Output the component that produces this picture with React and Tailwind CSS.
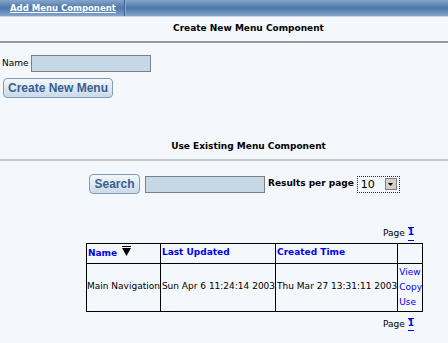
const font = { fontFamily: '"DejaVu Sans", Verdana, sans-serif' };

const Button = ({ children, className = '' }) => (
    <button
        className={`whitespace-nowrap rounded-[4px] border border-[#7f9db9] bg-gradient-to-b from-[#f4f8fc] to-[#c9d9ea] px-0 text-[12px] font-bold leading-none text-[#3a5f8e] ${className}`}
        style={{ fontFamily: '"Liberation Sans", Arial, sans-serif' }}
    >
        {children}
    </button>
);

const PageLink = () => (
    <div className="flex justify-end pr-[34px] text-[9px] text-black">
        <span>Page&nbsp;</span>
        <a className="border-t border-b border-[#0000ee] font-bold leading-[9px] text-[#0000ee]">1</a>
    </div>
);

export default function App() {
    return (
        <div className="h-[343px] w-[448px] overflow-hidden bg-[#f4f7fb]" style={font}>
            {/* header tab bar */}
            <div className="flex h-[16px] bg-gradient-to-b from-[#86a5cb] via-[#4d77aa] to-[#86a5cb]">
                <div className="flex w-[125px] items-center border-r border-[#3d6291] pl-[10px]">
                    <span className="text-[8.5px] font-bold leading-none text-white underline">Add Menu Component</span>
                </div>
                <div className="flex-1 border-l border-[#8eaad0]" />
            </div>
            <div className="h-[1px] bg-[#c8d6e8]" />

            <div className="flex h-[24px] items-center justify-center pl-[49px] text-[9px] font-bold">
                Create New Menu Component
            </div>
            <div className="h-[2px] bg-[#9a9a9a]" />

            <div className="mt-[12px] flex items-center gap-[2px] pl-[2px] text-[9px]">
                <span>Name</span>
                <div className="h-[17px] w-[120px] border border-[#808080] bg-[#c6d7e6]" />
            </div>
            <Button className="ml-[3px] mt-[6px] block h-[20px] w-[110px]">Create New Menu</Button>

            <div className="mt-[39px] flex h-[20px] items-center justify-center pl-[49px] text-[9px] font-bold">
                Use Existing Menu Component
            </div>
            <div className="mt-[2px] h-[2px] bg-[#c8c8c8]" />

            <div className="mt-[13px] flex items-center pl-[89px] text-[9px] font-bold">
                <Button className="h-[20px] w-[51px]">Search</Button>
                <div className="ml-[5px] h-[17px] w-[120px] border border-[#808080] bg-[#c6d7e6]" />
                <span className="ml-[3px]">Results per page</span>
                <div className="ml-[3px] flex h-[17px] w-[43px] items-center border border-dotted border-[#1a2a4a] bg-[#f4f7fb] font-normal">
                    <span className="flex-1 pl-[3px] text-[11px] leading-none">10</span>
                    <div className="mr-[2px] flex h-[12px] w-[12px] items-center justify-center border border-[#808080] bg-[#d4d0c8]">
                        <svg width="5" height="3" viewBox="0 0 5 3"><path d="M0 0h5L2.5 3z" fill="#000" /></svg>
                    </div>
                </div>
            </div>

            <div className="mt-[33px]">
                <PageLink />
            </div>

            <table className="ml-[86px] mt-[2px] w-[328px] border-collapse border border-black text-[9px]">
                <thead>
                    <tr className="h-[20px]">
                        <th className="w-[73px] border border-black p-0 pl-[1px] text-left font-bold text-[#0000ee]">
                            <span className="inline-flex items-end">
                                Name
                                <svg className="mb-[4px] ml-[5px]" width="9" height="10" viewBox="0 0 9 10"><path d="M0 2h9L4.5 10z M0 0h9v1H0z" fill="#000" /></svg>
                            </span>
                        </th>
                        <th className="w-[110px] border border-black p-0 pl-[1px] text-left font-bold text-[#0000ee]">Last Updated</th>
                        <th className="w-[117px] border border-black p-0 pl-[1px] text-left font-bold text-[#0000ee]">Created Time</th>
                        <th className="border border-black p-0" />
                    </tr>
                </thead>
                <tbody>
                    <tr className="h-[48px]">
                        <td className="whitespace-nowrap border border-black p-0">Main Navigation</td>
                        <td className="whitespace-nowrap border border-black p-0 pl-[1px]">Sun Apr 6 11:24:14 2003</td>
                        <td className="whitespace-nowrap border border-black p-0 pl-[1px]">Thu Mar 27 13:31:11 2003</td>
                        <td className="border border-black p-0 pl-[1px] leading-[15px] text-[#0000ee]">
                            <div>View</div>
                            <div>Copy</div>
                            <div>Use</div>
                        </td>
                    </tr>
                </tbody>
            </table>

            <div className="mt-[6px]">
                <PageLink />
            </div>
        </div>
    );
}
